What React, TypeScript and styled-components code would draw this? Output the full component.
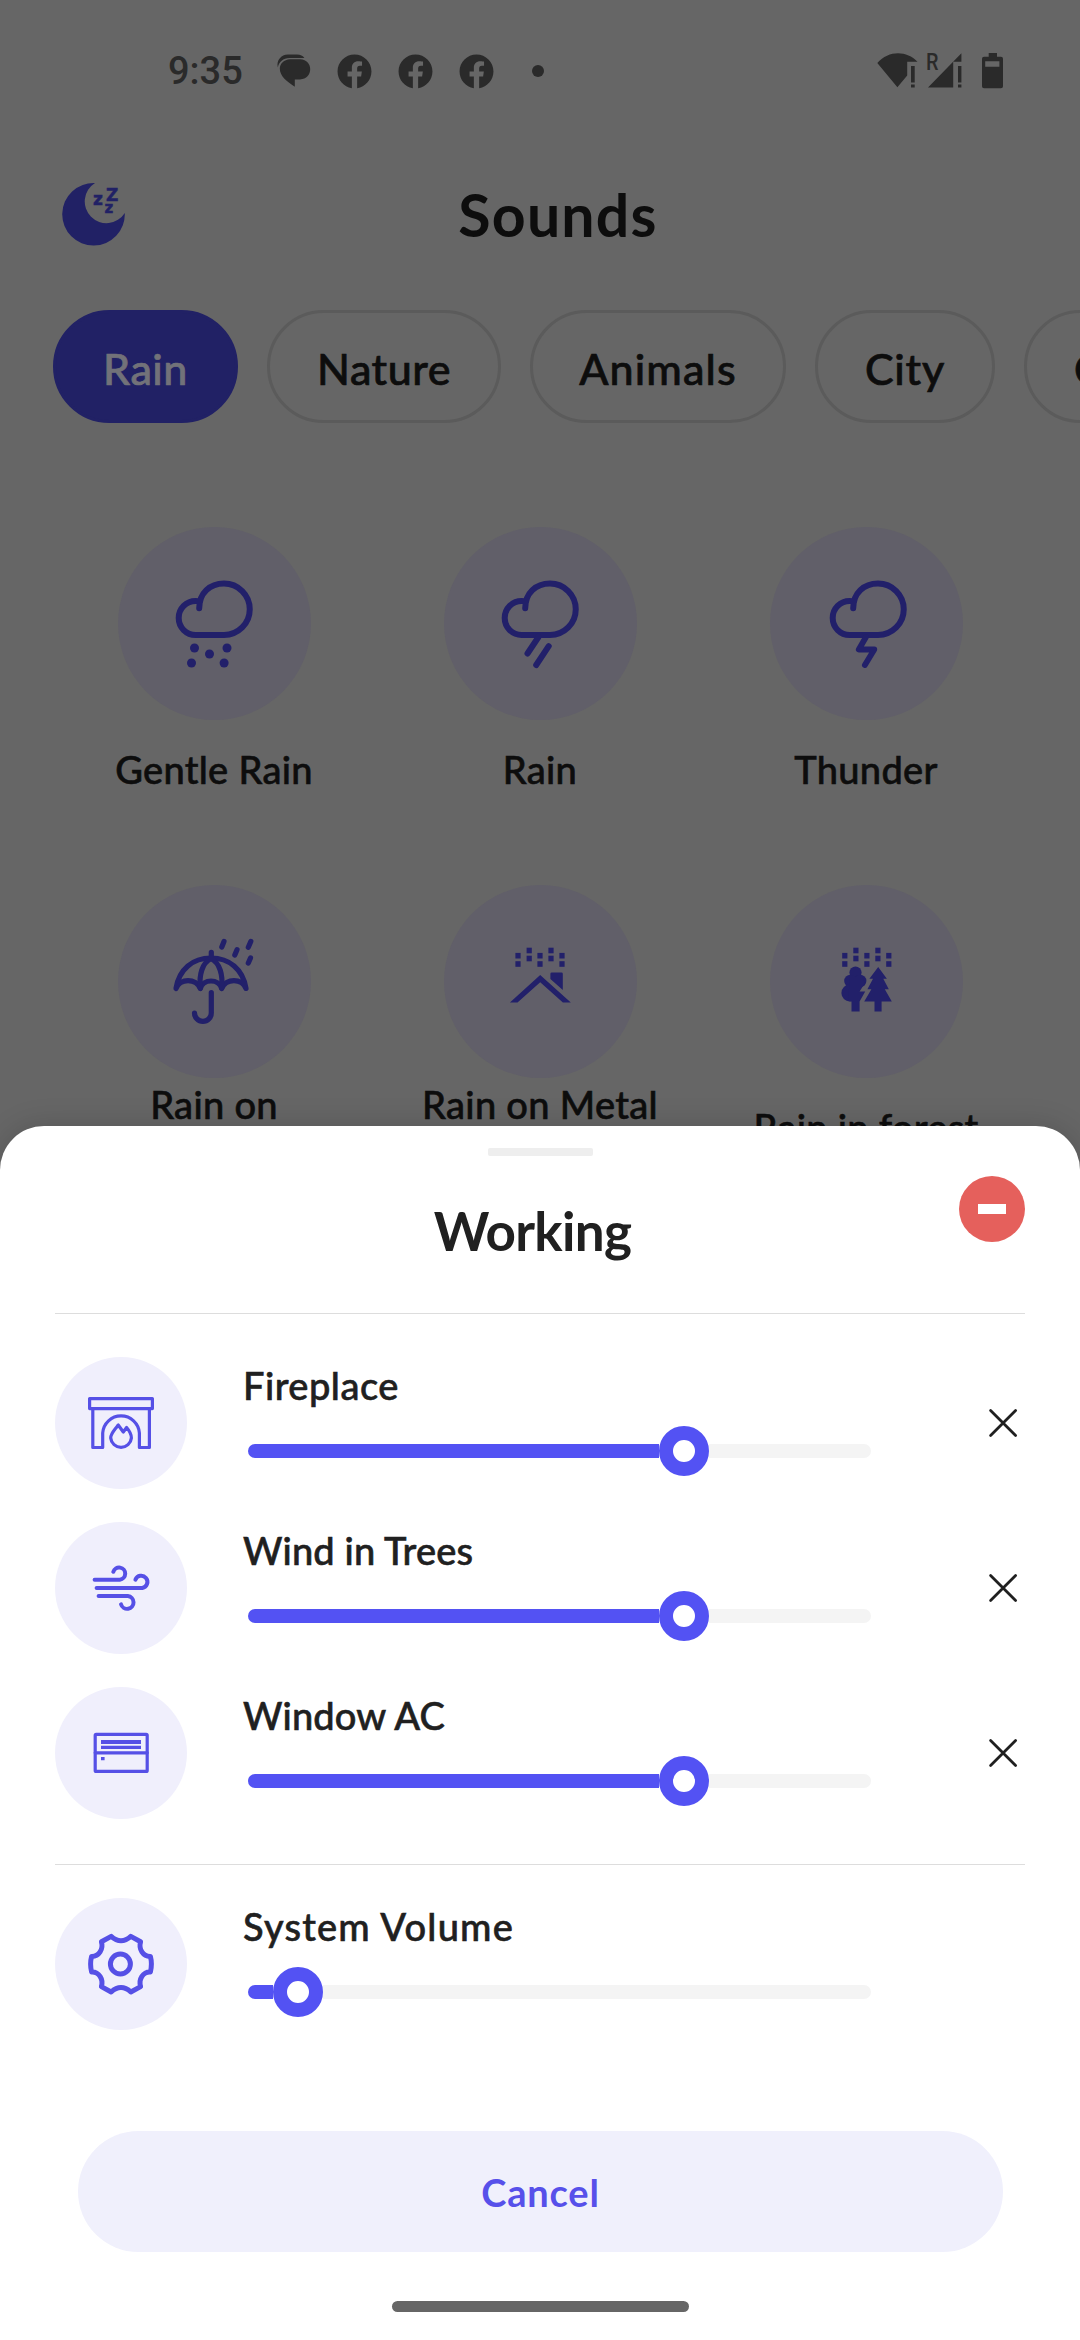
import React from "react";
import styled, { createGlobalStyle } from "styled-components";
import { FaFacebook } from "react-icons/fa";

const GlobalStyle = createGlobalStyle`
  *, *::before, *::after { box-sizing: border-box; }
  html, body { margin: 0; padding: 0; background: #666666; }
  body { font-family: Lato, "Open Sans", "Noto Sans", sans-serif; }
  button { font: inherit; border: 0; padding: 0; background: none; }
  svg { display: block; flex: none; }
`;

const Screen = styled.div`
  position: relative;
  width: 1080px;
  height: 2340px;
  overflow: hidden;
  background: #666666;
  color: #0d0d0d;
  display: flex;
  flex-direction: column;
`;

const StatusBar = styled.header`
  height: 142px;
  padding: 0 60px 0 168px;
  display: flex;
  align-items: center;
  justify-content: space-between;
  color: #2a2a2a;
`;

const StatusGroup = styled.div`
  display: flex;
  align-items: center;
`;

const Clock = styled.span`
  width: 108px;
  font-family: Roboto, sans-serif;
  font-size: 38px;
  font-weight: 500;
  line-height: 44px;
`;

const Notifications = styled.div`
  display: flex;
  align-items: center;
  gap: 26px;
`;

const MoreDot = styled.span`
  width: 12px;
  height: 12px;
  margin-left: 12px;
  border-radius: 50%;
  background: currentColor;
`;

const TitleBar = styled.div`
  height: 144px;
  padding: 0 62px;
  display: grid;
  grid-template-columns: 64px 1fr 30px;
  align-items: center;
  color: #0d0d0d;
`;

const PageTitle = styled.h1`
  margin: 2px 0 0 2px;
  text-align: center;
  font-size: 59px;
  line-height: 72px;
  font-weight: 700;
  letter-spacing: 1.2px;
`;

const Chips = styled.nav`
  margin-top: 24px;
  height: 113px;
  padding-left: 53px;
  display: flex;
  gap: 29px;
`;

const Chip = styled.button<{ $width: number; $active?: boolean; $tracking?: number }>`
  flex: none;
  width: ${(p) => p.$width}px;
  height: 113px;
  padding-top: 4px;
  border-radius: 57px;
  border: 3px solid ${(p) => (p.$active ? "#212165" : "#5b5b5b")};
  background: ${(p) => (p.$active ? "#212165" : "transparent")};
  color: ${(p) => (p.$active ? "#727279" : "#0d0d0d")};
  font-size: 43px;
  font-weight: 500;
  -webkit-text-stroke: 0.7px currentColor;
  line-height: 52px;
  letter-spacing: ${(p) => p.$tracking ?? 0}px;
  white-space: nowrap;
`;

const SoundGrid = styled.main`
  margin-top: 104px;
  padding: 0 51px;
  display: grid;
  grid-template-columns: repeat(3, 326px);
  row-gap: 68px;
`;

const Sound = styled.div`
  display: flex;
  flex-direction: column;
  align-items: center;
`;

const SoundIcon = styled.div`
  width: 193px;
  height: 193px;
  border-radius: 50%;
  background: #615f69;
  color: #22206a;
`;

const SoundLabel = styled.div<{ $tall?: boolean }>`
  height: 97px;
  width: 290px;
  padding-top: ${(p) => (p.$tall ? 3 : 26)}px;
  text-align: center;
  font-size: 38px;
  font-weight: 500;
  -webkit-text-stroke: 0.6px currentColor;
  line-height: 46px;
  letter-spacing: 0.3px;
`;

const Sheet = styled.section`
  position: absolute;
  left: 0;
  right: 0;
  bottom: 0;
  height: 1214px;
  padding: 22px 55px 0;
  border-radius: 44px 44px 0 0;
  background: #ffffff;
  box-shadow: 0 0 30px rgba(0, 0, 0, 0.16);
  color: #202020;
  display: flex;
  flex-direction: column;
`;

const Handle = styled.div`
  align-self: center;
  width: 105px;
  height: 8px;
  border-radius: 2px;
  background: #eeeeee;
`;

const SheetHeader = styled.div`
  height: 157px;
  display: grid;
  grid-template-columns: 54px 1fr 66px;
  align-items: start;
`;

const SheetTitle = styled.h2`
  margin: 42px 3px 0 0;
  text-align: center;
  font-size: 53px;
  line-height: 66px;
  font-weight: 700;
  letter-spacing: -0.7px;
`;

const ClearButton = styled.button`
  width: 66px;
  height: 66px;
  margin-top: 20px;
  border-radius: 50%;
  background: #e5605c;
  display: flex;
  align-items: center;
  justify-content: center;
`;

const Minus = styled.span`
  width: 28px;
  height: 10px;
  background: #ffffff;
`;

const Divider = styled.div`
  height: 1px;
  background: #dddddd;
`;

const Rows = styled.div<{ $top: number; $bottom: number }>`
  padding-top: ${(p) => p.$top}px;
  padding-bottom: ${(p) => p.$bottom}px;
  display: flex;
  flex-direction: column;
  gap: 33px;
`;

const Row = styled.div`
  height: 132px;
  display: grid;
  grid-template-columns: 132px 56px 628px 1fr;
  align-items: center;
`;

const RowIcon = styled.div`
  width: 132px;
  height: 132px;
  border-radius: 50%;
  background: #f0effc;
  color: #5650e6;
`;

const RowBody = styled.div`
  grid-column: 3;
  height: 132px;
  padding-top: 5px;
`;

const RowName = styled.div<{ $tracking?: number }>`
  font-size: 38px;
  line-height: 46px;
  font-weight: 500;
  -webkit-text-stroke: 0.6px currentColor;
  letter-spacing: ${(p) => p.$tracking ?? 0}px;
  white-space: nowrap;
`;

const Slider = styled.div`
  height: 50px;
  margin: 18px 0 0 5px;
  width: 623px;
  display: flex;
  align-items: center;
`;

const Filled = styled.div`
  height: 14px;
  border-radius: 7px 0 0 7px;
  background: #5352f3;
`;

const Thumb = styled.div`
  flex: none;
  width: 50px;
  height: 50px;
  border-radius: 50%;
  border: 14px solid #5352f3;
  background: #ffffff;
`;

const Rest = styled.div`
  flex: 1;
  height: 14px;
  border-radius: 0 7px 7px 0;
  background: #f4f4f4;
`;

const RemoveButton = styled.button`
  justify-self: end;
  width: 44px;
  height: 44px;
  color: #202020;
`;

const CancelButton = styled.button`
  margin: 0 22px 0 23px;
  height: 121px;
  padding-top: 1px;
  border-radius: 61px;
  background: #f0f0fc;
  color: #5750ea;
  font-size: 38px;
  line-height: 46px;
  font-weight: 700;
  letter-spacing: 0.8px;
`;

const HomeBar = styled.div`
  align-self: center;
  width: 297px;
  height: 11px;
  margin-top: 49px;
  border-radius: 6px;
  background: #666666;
`;

const stroke = {
  fill: "none",
  stroke: "currentColor",
  strokeLinecap: "round" as const,
  strokeLinejoin: "round" as const,
};

const ChatIcon = () => (
  <svg width="35" height="34" viewBox="0 0 35 34" fill="currentColor">
    <path d="M14 5.2 H24 C31 5.6 34.2 10.3 34.2 15 C34.2 20.5 30.5 25.2 24 25.4 H18.8 V32.8 C11 27.5 4 22.5 3.8 14.8 C3.8 9.5 8 5.5 14 5.2 Z" />
    <path d="M1.8 13.5 C0.2 6.5 5 0.8 12 0.6 H21 C24.5 0.8 27 2 28.4 4.1 H13.5 C7 4.3 3.2 7.8 1.8 13.5 Z" />
  </svg>
);

const SystemIcons = () => (
  <svg width="150" height="46" viewBox="0 0 150 46" fill="currentColor">
    <path d="M7.3 14.9 C18.5 2.2 36.5 2 47.5 13.7 H37.2 V27.5 L27.4 39.3 Z" />
    <path d="M41 18 h3.7 v16.6 h-3.7 z M41 36.4 h3.7 v3 h-3.7 z" />
    <text x="56" y="21.8" fontFamily="Roboto, sans-serif" fontSize="23.5" fontWeight="500" textLength="12.5" lengthAdjust="spacingAndGlyphs">R</text>
    <path d="M58 39.6 L91.4 5.3 V13.7 H83.2 V39.6 Z" />
    <path d="M88 18 h3.4 v16.6 h-3.4 z M88 36.4 h3.4 v3 h-3.4 z" />
    <path
      fillRule="evenodd"
      d="M118.7 5 H127 V8.7 H131 Q133 8.7 133 10.7 V38.3 Q133 40.3 131 40.3 H114 Q112 40.3 112 38.3 V10.7 Q112 8.7 114 8.7 H118.7 Z M115.2 13.3 V18.7 H129.4 V13.3 Z"
    />
  </svg>
);

const MoonIcon = () => (
  <svg width="64" height="64" viewBox="0 0 64 64" fill="#212165">
    <path d="M33 1 A31.3 31.3 0 1 0 62.8 31 A21.7 21.7 0 1 1 33 1 Z" />
    <g fontFamily="DejaVu Sans, sans-serif" fontWeight="700" stroke="#212165" strokeWidth="0.5">
      <text x="44" y="19" fontSize="17">Z</text>
      <text x="31" y="23.3" fontSize="17">z</text>
      <text x="42.6" y="31.4" fontSize="15">z</text>
    </g>
  </svg>
);

const SoundSvg = ({ shift = 0, children }: { shift?: number; children: React.ReactNode }) => (
  <svg width="193" height="193" viewBox={`${shift} 0 193 193`}>{children}</svg>
);

const Cloud = () => (
  <path
    {...stroke}
    strokeWidth="6"
    d="M82.7 81.3 C82.7 66 93.5 56.5 107.5 56.5 A25.75 25.75 0 0 1 107.5 108 H79.2 A17 17 0 0 1 79.2 74 Q81.5 74 83.6 74.6"
  />
);

const GentleRainIcon = () => (
  <SoundSvg shift={1.5}>
    <Cloud />
    <g fill="currentColor">
      <circle cx="78" cy="121" r="4.5" />
      <circle cx="110.5" cy="121" r="4.5" />
      <circle cx="93" cy="127" r="4.5" />
      <circle cx="75" cy="136" r="4.5" />
      <circle cx="107.6" cy="136" r="4.5" />
    </g>
  </SoundSvg>
);

const RainIcon = () => (
  <SoundSvg shift={1.5}>
    <Cloud />
    <path {...stroke} strokeWidth="6" d="M96 110 L85 126.5 M106.2 119.2 L93.7 138" />
  </SoundSvg>
);

const ThunderIcon = () => (
  <SoundSvg shift={-0.5}>
    <Cloud />
    <path {...stroke} strokeWidth="5.8" d="M95.5 110 L88.3 122.5 H103.8 L94.4 138" />
  </SoundSvg>
);

const UmbrellaIcon = () => (
  <SoundSvg>
    <g {...stroke} strokeWidth="5.2">
      <path d="M58 103.5 C61 84 75 73 93 73 S125 84 128 103.5 C124 93 108 93 103.7 103.5 C101 93.5 85 93.5 82.3 103.5 C78 93 62 93 58 103.5 Z" />
      <path d="M93 73.5 C84 78 81 90 82.3 103 M93 73.5 C102 78 105 90 103.7 103 M93.3 67.3 V73" />
      <path d="M93.3 107.5 V128 A8.4 8.4 0 0 1 76.5 128" />
      <path d="M106 56.5 L103.8 62 M119 64.7 L116.8 70 M132.8 56.5 L130.3 62.3 M132.5 73 L130.3 78" />
    </g>
  </SoundSvg>
);

const Drops = ({ columns }: { columns: number[] }) => (
  <g fill="currentColor">
    {columns.map((x, i) =>
      (i % 2 ? [65.5, 73.5] : [70.7, 79]).map((y) => (
        <rect key={`${x}-${y}`} x={x - 2.6} y={y - 2.8} width="5.2" height="5.6" />
      ))
    )}
  </g>
);

const MetalRoofIcon = () => (
  <SoundSvg>
    <Drops columns={[74, 85.2, 96, 107, 118]} />
    <path
      fill="currentColor"
      d="M65.9 117.5 L96.2 90 L126.8 117.5 H118.9 L96.2 97.3 L73.5 117.5 Z M106.4 88.8 Q106.4 87.4 107.8 87.4 H117.4 Q118.8 87.4 118.8 88.8 V105 L106.4 94 Z"
    />
  </SoundSvg>
);

const ForestIcon = () => (
  <SoundSvg>
    <Drops columns={[74.8, 85.9, 96.9, 107.9, 118.8]} />
    <g fill="currentColor">
      <circle cx="85.5" cy="87.6" r="6.1" />
      <circle cx="80.4" cy="96" r="6.2" />
      <circle cx="90.2" cy="96" r="6.2" />
      <circle cx="79.8" cy="108" r="8.4" />
      <path d="M80 92 H92 L95.2 97.5 L89.6 106.6 H95.2 L89.6 116.4 V126.6 H81.5 V116.4 L78 116 Z" />
      <path d="M108.2 82 L116.9 93.7 H113.3 L118.8 104.3 H114.8 L121.8 116.5 H111.6 V126.6 H104.5 V116.5 H94.2 L101.4 104.3 H97.4 L103 93.7 H99.4 Z" />
    </g>
  </SoundSvg>
);

const RowSvg = ({ children }: { children: React.ReactNode }) => (
  <svg width="132" height="132" viewBox="0 0 132 132">{children}</svg>
);

const FireplaceIcon = () => (
  <RowSvg>
    <g {...stroke} strokeWidth="3.2">
      <rect x="34.6" y="41.6" width="62.8" height="10" />
      <path d="M37.8 52 V90.5 H47.7 V76 A18.4 18.4 0 0 1 84.4 76 V90.5 H94.4 V52" />
      <path d="M63.2 68 C59.3 73.5 55.7 76.5 55.7 81 A10.4 10.4 0 0 0 76.4 81 C76.4 76.5 74.3 73.6 71.6 70.5 L68.3 75 Z" />
    </g>
  </RowSvg>
);

const WindIcon = () => (
  <RowSvg>
    <g {...stroke} strokeWidth="4">
      <path d="M39.6 57.7 H64.8 A6.1 6.1 0 1 0 58.3 49.8" />
      <path d="M41.6 66 H87.3 A6.2 6.2 0 1 0 80.4 57.7" />
      <path d="M43.6 74.1 H72.8 A6.4 6.4 0 1 1 66 82.3" />
    </g>
  </RowSvg>
);

const WindowAcIcon = () => (
  <RowSvg>
    <g {...stroke} strokeWidth="3.2">
      <rect x="40.2" y="47.4" width="52" height="37" rx="1" />
      <path d="M40.2 65.8 H92.2" />
    </g>
    <path fill="currentColor" d="M46 53 H86 V57 H46 Z M46 58.7 H86 V62 H46 Z M46 70 H49.6 V73.2 H46 Z" />
  </RowSvg>
);

const GearIcon = () => (
  <RowSvg>
    <g {...stroke} strokeWidth="5">
      <circle cx="65.4" cy="66" r="10" />
      <path d="M56.2 38.4 Q61 42.8 66 42.8 Q71 42.8 75.8 38.4 L85.6 43.8 C83.4 51 88 58.6 95.4 58.4 Q97.4 66 95.4 74 C88 73.6 83.4 81.4 85.6 88.6 L75.8 94 Q71 89.6 66 89.6 Q61 89.6 56.2 94 L46.4 88.6 C48.6 81.4 44 73.6 36.6 74 Q34.6 66 36.6 58.4 C44 58.6 48.6 51 46.4 43.8 Z" />
    </g>
  </RowSvg>
);

const CloseIcon = () => (
  <svg width="44" height="44" viewBox="0 0 44 44">
    <path {...stroke} strokeWidth="2.8" d="M9.6 9.6 L34.6 34.6 M34.6 9.6 L9.6 34.6" />
  </svg>
);

const chips = [
  { name: "Rain", width: 185, active: true, tracking: 0.5 },
  { name: "Nature", width: 234, tracking: 0.5 },
  { name: "Animals", width: 256, tracking: 1.1 },
  { name: "City", width: 180, tracking: 0.8 },
  { name: "Others", width: 234, tracking: 0.5 },
];

const sounds = [
  { name: "Gentle Rain", icon: <GentleRainIcon /> },
  { name: "Rain", icon: <RainIcon /> },
  { name: "Thunder", icon: <ThunderIcon /> },
  { name: "Rain on", icon: <UmbrellaIcon />, tall: true },
  { name: "Rain on Metal", icon: <MetalRoofIcon />, tall: true },
  { name: "Rain in forest", icon: <ForestIcon /> },
];

const playing = [
  { name: "Fireplace", icon: <FireplaceIcon />, filled: 411, tracking: 0.5 },
  { name: "Wind in Trees", icon: <WindIcon />, filled: 411, tracking: 0.15 },
  { name: "Window AC", icon: <WindowAcIcon />, filled: 411, tracking: 0.15 },
];

type MixerRowProps = {
  name: string;
  icon: React.ReactNode;
  filled: number;
  tracking?: number;
  removable?: boolean;
};

const MixerRow = ({ name, icon, filled, tracking, removable }: MixerRowProps) => (
  <Row>
    <RowIcon>{icon}</RowIcon>
    <RowBody>
      <RowName $tracking={tracking}>{name}</RowName>
      <Slider>
        <Filled style={{ width: filled }} />
        <Thumb />
        <Rest />
      </Slider>
    </RowBody>
    {removable && (
      <RemoveButton aria-label="Remove">
        <CloseIcon />
      </RemoveButton>
    )}
  </Row>
);

export default function App() {
  return (
    <>
      <GlobalStyle />
      <Screen>
        <StatusBar>
          <StatusGroup>
            <Clock>9:35</Clock>
            <Notifications>
              <ChatIcon />
              <FaFacebook size={35} />
              <FaFacebook size={35} />
              <FaFacebook size={35} />
              <MoreDot />
            </Notifications>
          </StatusGroup>
          <SystemIcons />
        </StatusBar>
        <TitleBar>
          <MoonIcon />
          <PageTitle>Sounds</PageTitle>
        </TitleBar>
        <Chips>
          {chips.map((c) => (
            <Chip key={c.name} $width={c.width} $active={c.active} $tracking={c.tracking}>
              {c.name}
            </Chip>
          ))}
        </Chips>
        <SoundGrid>
          {sounds.map((s) => (
            <Sound key={s.name}>
              <SoundIcon>{s.icon}</SoundIcon>
              <SoundLabel $tall={s.tall}>{s.name}</SoundLabel>
            </Sound>
          ))}
        </SoundGrid>
        <Sheet>
          <Handle />
          <SheetHeader>
            <span />
            <SheetTitle>Working</SheetTitle>
            <ClearButton aria-label="Clear all">
              <Minus />
            </ClearButton>
          </SheetHeader>
          <Divider />
          <Rows $top={43} $bottom={45}>
            {playing.map((p) => (
              <MixerRow key={p.name} {...p} removable />
            ))}
          </Rows>
          <Divider />
          <Rows $top={33} $bottom={101}>
            <MixerRow name="System Volume" icon={<GearIcon />} filled={25} tracking={1.2} />
          </Rows>
          <CancelButton>Cancel</CancelButton>
          <HomeBar />
        </Sheet>
      </Screen>
    </>
  );
}
